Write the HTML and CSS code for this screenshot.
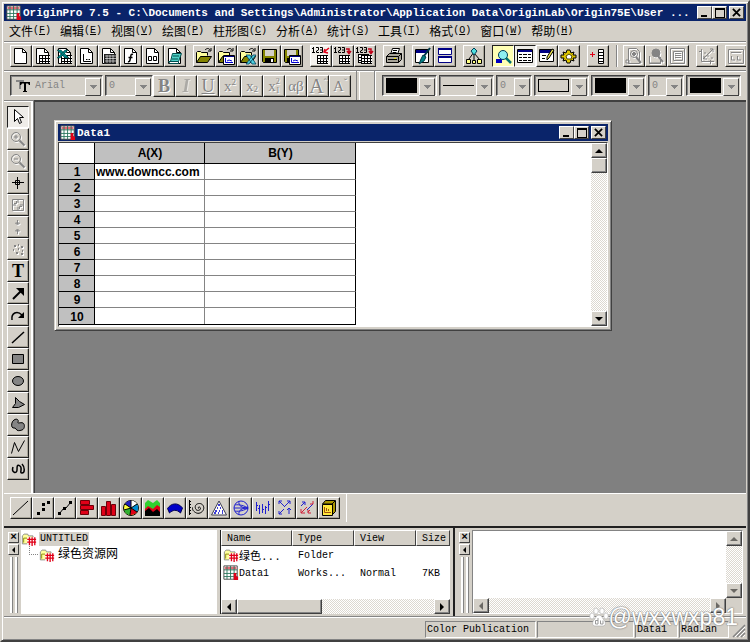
FILE: index.html
```
<!DOCTYPE html>
<html lang="zh-CN">
<head>
    <meta charset="UTF-8">
    <meta name="viewport" content="width=device-width, initial-scale=1.0">
    <title>OriginPro 7.5</title>
    <link rel="stylesheet" href="styles.css">
</head>
<body>
    <!-- Shared icon parts -->
    <svg class="defs" width="0" height="0">
        <symbol id="page" viewBox="0 0 18 18"><path d="M2.5 1.5h8l4 4v11h-12z" fill="#fff" stroke="#000"/><path d="M10.5 1.5v4h4" fill="none" stroke="#000"/></symbol>
        <symbol id="folder" viewBox="0 0 18 18"><path d="M1.5 15.5v-10l1-1h3l1 1h6v3" fill="#ffff9c" stroke="#000"/><path d="M1.5 15.5l4-6h11l-4 6z" fill="#848400" stroke="#000"/><path d="M10 3c2-2 4-2 5 0m1-2v3h-3" fill="none" stroke="#000"/></symbol>
        <symbol id="floppy" viewBox="0 0 18 18"><path d="M1.5 2.5h14v13h-13l-1-1z" fill="#848400" stroke="#000"/><path d="M4 3h9v6H4z" fill="#d4d0c8"/><path d="M4 11h9v5H4z" fill="#000"/><path d="M10 12h2v3h-2z" fill="#fff"/></symbol>
        <symbol id="sheet" viewBox="0 0 18 18"><path d="M5 8h11v9H5z" fill="#fff"/><path d="M5.500 8v9M8.500 8v9M11.500 8v9M14.500 8v9M5 8.500h11M5 11.500h11M5 14.500h11M5 16.500h11" stroke="#000"/></symbol>
        <symbol id="digits" viewBox="0 0 18 18"><path d="M1.500 0v5M0 1.500h1M0 5.500h3M4 .5h2.500v2.500l-2 1v1.500H7M8 .5h2.500v5H8M8 3h2" fill="none" stroke="#000"/></symbol>
        <symbol id="project" viewBox="0 0 18 18"><path d="M1.500 14.500v-9l2-2h4l1 2h5v9z" fill="#ffff9c" stroke="#848484"/><path d="M3 13V8h4" fill="none" stroke="#848400"/><path d="M7 7h10v9H7z" fill="#fff"/><path d="M7 9.500h10M7 12.500h10M9.500 7v9M12.500 7v10M15.500 7v9" stroke="#e00018" stroke-width="1.500"/></symbol>
        <symbol id="book" viewBox="0 0 18 18"><path d="M1 1h15v15H1z" fill="#fff" stroke="#444"/><path d="M2 2h13v3H2z" fill="#e26a76"/><path d="M1 5.500h15M1 9.500h15M1 13h15M4.500 1v15M8.500 1v15M12.500 1v15" stroke="#26735a"/><path d="M12 9h3v4h2v4h-5z" fill="#e00018"/></symbol>
    </svg>

    <div class="app">
        <header class="titlebar">
            <svg class="ico" viewBox="0 0 18 18"><use href="#book"/></svg>
            <span class="caption">OriginPro 7.5 - C:\Documents and Settings\Administrator\Application Data\OriginLab\Origin75E\User ...</span>
            <div class="winbtns">
                <button aria-label="Minimize"><svg viewBox="0 0 12 10"><path d="M2 7h6v2H2z"/></svg></button>
                <button aria-label="Maximize"><svg viewBox="0 0 12 10"><path d="M1 0h10v10H1zM2 2v7h8V2z" fill-rule="evenodd"/></svg></button>
                <button class="close" aria-label="Close"><svg viewBox="0 0 12 10"><path d="M2 1l8 8M10 1L2 9" stroke="#000" stroke-width="2"/></svg></button>
            </div>
        </header>

        <nav class="menu">
            <button>文件<span>(<u>F</u>)</span></button>
            <button>编辑<span>(<u>E</u>)</span></button>
            <button>视图<span>(<u>V</u>)</span></button>
            <button>绘图<span>(<u>P</u>)</span></button>
            <button>柱形图<span>(<u>C</u>)</span></button>
            <button>分析<span>(<u>A</u>)</span></button>
            <button>统计<span>(<u>S</u>)</span></button>
            <button>工具<span>(<u>T</u>)</span></button>
            <button>格式<span>(<u>O</u>)</span></button>
            <button>窗口<span>(<u>W</u>)</span></button>
            <button>帮助<span>(<u>H</u>)</span></button>
        </nav>

        <!-- Standard toolbar -->
        <div class="toolbar standard">
            <div class="group">
                <button class="tool" aria-label="New project"><svg viewBox="0 0 18 18"><use href="#page"/></svg></button>
                <button class="tool" aria-label="New worksheet"><svg viewBox="0 0 18 18"><use href="#page"/><use href="#sheet"/></svg></button>
                <button class="tool" aria-label="New Excel"><svg viewBox="0 0 18 18"><use href="#page"/><use href="#sheet"/><path d="M1 3h4l8 8H9zM9 3h3l-8 8H1z" fill="#008484" stroke="#003838" stroke-width=".5"/></svg></button>
                <button class="tool" aria-label="New graph"><svg viewBox="0 0 18 18"><use href="#page"/><path d="M5.500 7v7.500H13M8 12.500h1.500m1 0H12" fill="none" stroke="#000"/></svg></button>
                <button class="tool" aria-label="New matrix"><svg viewBox="0 0 18 18"><use href="#page"/><path d="M4 7h12v10H4z" fill="#222"/><path d="M5 9h11M5 11.500h11M5 14h11M7 8v8M10 8v8M13 8v8" stroke="#fff" stroke-width=".6"/></svg></button>
                <button class="tool" aria-label="New function"><svg viewBox="0 0 18 18"><use href="#page"/><path d="M11 7.500c-2-1-2 .5-2.500 3l-.5 2.500c-.3 1.500-1 2-2 1.500M6.500 10.500h4" fill="none" stroke="#000" stroke-width="1.500"/></svg></button>
                <button class="tool" aria-label="New layout"><svg viewBox="0 0 18 18"><use href="#page"/><path d="M4.500 9.500h3v4h-3zM9.500 9.500h3v4h-3z" fill="none" stroke="#000"/></svg></button>
                <button class="tool" aria-label="New notes"><svg viewBox="0 0 18 18"><use href="#page"/><path d="M6.500 6.500h9l-3 8H4.500z" fill="#4fd2c8" stroke="#004c4c"/><path d="M7 9h6M6 12h6" stroke="#004c4c"/><path d="M2.500 14.500h10v2H4z" fill="#fff" stroke="#004c4c"/></svg></button>
            </div>
            <div class="group">
                <button class="tool" aria-label="Open"><svg viewBox="0 0 18 18"><use href="#folder"/></svg></button>
                <button class="tool" aria-label="Open template"><svg viewBox="0 0 18 18"><use href="#folder"/><path d="M6.500 8.500h11v9h-11z" fill="#fff" stroke="#000"/><path d="M7 9h10v1H7z" fill="#000084"/><path d="M8.500 11v4.500H16M10 14l2-1 3 1" fill="none" stroke="#0000d0"/></svg></button>
                <button class="tool" aria-label="Open Excel"><svg viewBox="0 0 18 18"><use href="#folder"/><path d="M7 8h4l6 9h-4zM14 8h3l-7 9H7z" fill="#4fd2e0" stroke="#003c58" stroke-width=".8"/></svg></button>
                <button class="tool" aria-label="Save project"><svg viewBox="0 0 18 18"><use href="#floppy"/></svg></button>
                <button class="tool" aria-label="Save template"><svg viewBox="0 0 18 18"><use href="#floppy"/><path d="M6.500 8.500h11v9h-11z" fill="#fff" stroke="#000"/><path d="M7 9h10v1H7z" fill="#000084"/><path d="M8.500 11v4.500H16M10 14l2-1 3 1" fill="none" stroke="#0000d0"/></svg></button>
            </div>
            <div class="group">
                <button class="tool lit" aria-label="Import wizard"><svg viewBox="0 0 18 18"><use href="#digits"/><use href="#sheet"/><path d="M17 1l-5 4m1-3l-1 3 4 1" fill="none" stroke="#e00018" stroke-width="1.500"/></svg></button>
                <button class="tool" aria-label="Import ASCII"><svg viewBox="0 0 18 18"><use href="#digits"/><use href="#sheet"/><path d="M12 2h3v4m-2-2l2 2.500 2-2.500" fill="none" stroke="#c00018" stroke-width="1.500"/></svg></button>
                <button class="tool" aria-label="Import multiple"><svg viewBox="0 0 18 18"><use href="#digits"/><use href="#sheet" x="-3" y="-1"/><use href="#sheet"/><path d="M12 2h3v4m-2-2l2 2.500 2-2.500" fill="none" stroke="#c00018" stroke-width="1.500"/></svg></button>
            </div>
            <div class="group">
                <button class="tool" aria-label="Print"><svg viewBox="0 0 18 18"><path d="M5.500 7.500l2-6h7l-2 6z" fill="#fff" stroke="#000"/><path d="M8 3.500h4M7.500 5.500h4" stroke="#000"/><path d="M1.500 9.500l3-3h12v6l-3 3h-12z" fill="#a8a498" stroke="#000"/><path d="M1.500 9.500h12v6m0-6l3-3M3 12.500h9" fill="none" stroke="#000"/><path d="M9 11h2v1H9z" fill="#e8e000"/></svg></button>
            </div>
            <div class="group">
                <button class="tool" aria-label="Refresh"><svg viewBox="0 0 18 18"><path d="M1.500 2.500h13v13h-13z" fill="#fff" stroke="#000"/><path d="M2 3h12v3H2z" fill="#000084"/><path d="M16 1l-6 8" stroke="#003848" stroke-width="2"/><path d="M9 8l3 2-2 4-5 3 2-5z" fill="#008484" stroke="#003848"/></svg></button>
                <button class="tool" aria-label="Duplicate"><svg viewBox="0 0 18 18"><path d="M2.500 1.500h13v6h-13zM2.500 9.500h13v6h-13z" fill="#fff" stroke="#000084"/><path d="M2 1h14v2H2zM2 9h14v2H2z" fill="#000084"/></svg></button>
            </div>
            <div class="group">
                <button class="tool" aria-label="Custom routine"><svg viewBox="0 0 18 18"><path d="M9 5L4 12M9 5v10M9 6l6 7" stroke="#000"/><path d="M9 1l3 3-3 4-3-4z" fill="#4fe0e0" stroke="#003c58"/><path d="M1.500 12.500h4v4h-4zM7.500 13.500h3v3h-3zM12.500 12.500h4v4h-4z" fill="#ffff84" stroke="#000"/></svg></button>
            </div>
            <div class="group">
                <button class="tool pressed yellow" aria-label="Project explorer"><svg viewBox="0 0 18 18"><path d="M2 12h6v4H2z" fill="#0000c0"/><circle cx="9" cy="8" r="4.500" fill="#8ef0f0" stroke="#003c58"/><path d="M12 11l5 5" stroke="#007070" stroke-width="2.500"/></svg></button>
                <button class="tool pressed" aria-label="Results log"><svg viewBox="0 0 18 18"><path d="M1.500 2.500h15v13h-15z" fill="#fff" stroke="#000"/><path d="M2 3h14v2H2z" fill="#000084"/><path d="M3 7.500h3m1 0h4m1 0h3M3 10.500h3m1 0h4m1 0h3M3 13.500h3m1 0h4m1 0h3" stroke="#000"/></svg></button>
                <button class="tool" aria-label="Script window"><svg viewBox="0 0 18 18"><path d="M1.500 2.500h14v12h-14z" fill="#fff" stroke="#000"/><path d="M2 3h13v3H2z" fill="#000084"/><path d="M4 8.500h4M4 11.500h3" stroke="#000"/><path d="M14 2l2 1-5 8-2 2v-3z" fill="#e8e04c" stroke="#000"/></svg></button>
                <button class="tool" aria-label="Code builder"><svg viewBox="0 0 18 18"><path d="M1 8l3 0-1-3 3 1 1-3h3l1 3 3-1-1 3 3 0v3l-3 0 1 3-3-1-1 3H7l-1-3-3 1 1-3-3 0z" fill="#e0c800" stroke="#000"/><path d="M6 9l3-2 3 2-1 3H7z" fill="#fff" stroke="#524800"/></svg></button>
            </div>
            <div class="group">
                <button class="tool" aria-label="Add column"><svg viewBox="0 0 18 18"><path d="M1 7.500h5M3.500 5v5" stroke="#e00018"/><path d="M9.500 2.500h5v14h-5z" fill="#fff" stroke="#000"/><path d="M9 5.500h6M9 8.500h6M9 11.500h6M9 14.500h6" stroke="#000"/></svg></button>
            </div>
            <div class="group split">
                <button class="tool" disabled aria-label="Zoom graph"><svg viewBox="0 0 18 18" class="grey"><path d="M3.500 1.500h8l3 3v12h-11zM1 13h3v3H1z"/><circle cx="9" cy="7" r="3.500"/><path d="M11 10l5 6M9 5v4M7 7h4" stroke-width="2"/></svg></button>
                <button class="tool" disabled aria-label="Zoom out graph"><svg viewBox="0 0 18 18" class="grey"><path d="M2.500 9v7.500h11V10M2 16h12"/><circle cx="9" cy="6" r="4" fill="#848484"/><path d="M11 9l5 6" stroke-width="2"/></svg></button>
                <button class="tool" disabled aria-label="Whole page"><svg viewBox="0 0 18 18" class="grey"><path d="M1.500 1.500h14v15h-14zM4.500 4.500h9v9h-9zM6 6.500h6M6 8.500h6M6 10.500h6"/></svg></button>
            </div>
            <div class="group">
                <button class="tool" disabled aria-label="Rescale"><svg viewBox="0 0 18 18" class="grey"><path d="M3.500 2v12.500H16M1 4.500h3M12.500 13v4M5 12L15 2M6 6h2m1 3h2m2 2h2M12 2h3v3M6 9v3h3"/></svg></button>
            </div>
            <div class="group">
                <button class="tool" disabled aria-label="Layout"><svg viewBox="0 0 18 18" class="grey"><path d="M1.500 2.500h15v14h-15zM4 5.500h10M4.500 9v4H8M10.500 9v4H14"/></svg></button>
            </div>
        </div>

        <!-- Format and style toolbars -->
        <div class="toolbar format">
            <div class="combo font">
                <svg viewBox="0 0 18 18"><path d="M2 3h8v2H7v7H5V5H2z" fill="#848484"/><path d="M6 5h10v3h-1l-1-1.500h-2V14h1v1H9v-1h1V6.500H8L7 8H6z"/></svg>
                <select disabled aria-label="Font"><option>Arial</option></select>
            </div>
            <div class="combo size"><select disabled aria-label="Font size"><option>0</option></select></div>
            <div class="group letters">
                <button class="tool" disabled><b>B</b></button>
                <button class="tool" disabled><b><i>I</i></b></button>
                <button class="tool" disabled><u>U</u></button>
                <button class="tool" disabled><span>x</span><sup>2</sup></button>
                <button class="tool" disabled><span>x</span><sub>2</sub></button>
                <button class="tool" disabled aria-label="Super and subscript"><span>x</span><span class="stack"><span>2</span><span>1</span></span></button>
                <button class="tool" disabled>αβ</button>
                <button class="tool big" disabled><span>A</span><sup>ˆ</sup></button>
                <button class="tool" disabled><span>A</span><sup>ˇ</sup></button>
            </div>
            <div class="style">
                <div class="combo wide"><span class="swatch"></span><select disabled aria-label="Line color"></select></div>
                <div class="combo wide"><span class="rule"></span><select disabled aria-label="Line style"></select></div>
                <div class="combo num"><select disabled aria-label="Line width"><option>0</option></select></div>
                <div class="combo wide"><span class="swatch empty"></span><select disabled aria-label="Fill pattern"></select></div>
                <div class="combo wide"><span class="swatch"></span><select disabled aria-label="Fill color"></select></div>
                <div class="combo num"><select disabled aria-label="Pattern width"><option>0</option></select></div>
                <div class="combo wide"><span class="swatch"></span><select disabled aria-label="Pattern color"></select></div>
            </div>
        </div>

        <main class="work">
            <!-- Drawing tools -->
            <div class="tools">
                <button class="tool pressed" aria-label="Pointer"><svg viewBox="0 0 18 18"><path d="M5.500 1.500v12l3-3 2 5 2-1-2-5h4z" fill="#fff" stroke="#000"/></svg></button>
                <button class="tool" disabled aria-label="Zoom in"><svg viewBox="0 0 18 18" class="grey"><circle cx="7" cy="7" r="4.500"/><path d="M5 7h4M7 5v4"/><path d="M10.500 10.500l5 5" stroke-width="2"/></svg></button>
                <button class="tool" disabled aria-label="Zoom out"><svg viewBox="0 0 18 18" class="grey"><circle cx="7" cy="7" r="4.500"/><path d="M5 7h4"/><path d="M10.500 10.500l5 5" stroke-width="2"/></svg></button>
                <button class="tool" aria-label="Screen reader"><svg viewBox="0 0 18 18"><path d="M8.500 3v12M3 8.500h12" stroke="#000"/><path d="M6.500 6.500h4v4h-4z" fill="none" stroke="#000"/></svg></button>
                <button class="tool" disabled aria-label="Data reader"><svg viewBox="0 0 18 18" class="grey"><path d="M3.500 3.500h11v11h-11zM9 4v3m0 4v3M4 9h3m4 0h3M7.500 5v2.500H5M10.500 13v-2.500H13"/></svg></button>
                <button class="tool" disabled aria-label="Data selector"><svg viewBox="0 0 18 18" class="grey"><path d="M8.500 2v4m-2-1l2 2 2-2zM8.500 16v-4m-2 1l2-2 2 2z"/></svg></button>
                <button class="tool" disabled aria-label="Draw data"><svg viewBox="0 0 18 18" class="grey"><path d="M5 6h2M9 5h1M12 7h2M4 10h1M9 9h1M7 13h2M13 11h1M12 14h2" stroke-width="2"/></svg></button>
                <button class="tool glyph" aria-label="Text">T</button>
                <button class="tool" aria-label="Arrow"><svg viewBox="0 0 18 18"><path d="M4 15l8-8" stroke="#000" stroke-width="2"/><path d="M7 4h8v8z"/></svg></button>
                <button class="tool" aria-label="Curved arrow"><svg viewBox="0 0 18 18"><path d="M3 14C2 7 8 4 13 9" fill="none" stroke="#000" stroke-width="1.500"/><path d="M15 6v6H9z"/></svg></button>
                <button class="tool" aria-label="Line"><svg viewBox="0 0 18 18"><path d="M3 15L15 4" stroke="#000" stroke-width="1.500"/></svg></button>
                <button class="tool" aria-label="Rectangle"><svg viewBox="0 0 18 18"><path d="M3.500 4.500h11v9h-11z" fill="#848484" stroke="#000"/></svg></button>
                <button class="tool" aria-label="Circle"><svg viewBox="0 0 18 18"><ellipse cx="9" cy="9" rx="5.500" ry="4.500" fill="#848484" stroke="#000"/></svg></button>
                <button class="tool" aria-label="Polygon"><svg viewBox="0 0 18 18"><path d="M6.500 3.500l4 4 5 3-6 3h-6l3-4z" fill="#848484" stroke="#000"/></svg></button>
                <button class="tool" aria-label="Region"><svg viewBox="0 0 18 18"><path d="M5 4c3-2 5 0 4 2s3 0 5 1 2 6-1 7-5 1-6-1-3 0-4-2 0-6 2-7z" fill="#848484" stroke="#000"/></svg></button>
                <button class="tool" aria-label="Polyline"><svg viewBox="0 0 18 18"><path d="M2.500 15.500l3-11 4 9 6-11" fill="none" stroke="#000"/></svg></button>
                <button class="tool" aria-label="Freehand"><svg viewBox="0 0 18 18"><path d="M4 7c-2 6 4 7 4 3S8 4 11 6s-1 7 2 7 3-6 0-9" fill="none" stroke="#000" stroke-width="1.500"/></svg></button>
            </div>

            <div class="mdi">
                <section class="child">
                    <div class="titlebar">
                        <svg class="ico" viewBox="0 0 18 18"><use href="#book"/></svg>
                        <span class="caption">Data1</span>
                        <div class="winbtns">
                            <button aria-label="Minimize"><svg viewBox="0 0 12 10"><path d="M2 7h6v2H2z"/></svg></button>
                            <button aria-label="Maximize"><svg viewBox="0 0 12 10"><path d="M1 0h10v10H1zM2 2v7h8V2z" fill-rule="evenodd"/></svg></button>
                            <button class="close" aria-label="Close"><svg viewBox="0 0 12 10"><path d="M2 1l8 8M10 1L2 9" stroke="#000" stroke-width="2"/></svg></button>
                        </div>
                    </div>
                    <div class="sheet">
                        <div class="cells">
                            <table>
                                <colgroup><col class="num"><col class="a"><col class="b"></colgroup>
                                <thead><tr><td></td><th>A(X)</th><th>B(Y)</th></tr></thead>
                                <tbody>
                                    <tr><th>1</th><td>www.downcc.com</td><td></td></tr>
                                    <tr><th>2</th><td></td><td></td></tr>
                                    <tr><th>3</th><td></td><td></td></tr>
                                    <tr><th>4</th><td></td><td></td></tr>
                                    <tr><th>5</th><td></td><td></td></tr>
                                    <tr><th>6</th><td></td><td></td></tr>
                                    <tr><th>7</th><td></td><td></td></tr>
                                    <tr><th>8</th><td></td><td></td></tr>
                                    <tr><th>9</th><td></td><td></td></tr>
                                    <tr><th>10</th><td></td><td></td></tr>
                                </tbody>
                            </table>
                        </div>
                        <div class="scroll vert">
                            <button aria-label="Scroll up"><i class="up"></i></button>
                            <span class="thumb"></span>
                            <button class="end" aria-label="Scroll down"><i class="down"></i></button>
                        </div>
                    </div>
                </section>
            </div>
        </main>

        <!-- 2D graphs toolbar -->
        <div class="toolbar graphs">
            <div class="group">
                <button class="tool" aria-label="Line plot"><svg viewBox="0 0 18 18"><path d="M1 16L16 2" stroke="#000"/></svg></button>
                <button class="tool" aria-label="Scatter plot"><svg viewBox="0 0 18 18"><path d="M3 13h3v3H3zM8 9h3v3H8zM8 4h3v3H8zM13 2h3v3h-3z"/></svg></button>
                <button class="tool" aria-label="Line and symbol"><svg viewBox="0 0 18 18"><path d="M3 15l5-6 2 0 5-6" fill="none" stroke="#000"/><path d="M2 13h3v3H2zM7 8h3v3H7zM13 2h3v3h-3z"/></svg></button>
                <button class="tool" aria-label="Bar"><svg viewBox="0 0 18 18"><path d="M2.500 1.500h9v4h-9zM2.500 6.500h13v4h-13zM2.500 11.500h8v4h-8z" fill="#e00018" stroke="#6c0008"/></svg></button>
                <button class="tool" aria-label="Column"><svg viewBox="0 0 18 18"><path d="M1.500 7.500h4v9h-4zM6.500 2.500h4v14h-4zM11.500 5.500h4v11h-4z" fill="#e00018" stroke="#6c0008"/></svg></button>
                <button class="tool" aria-label="Pie"><svg viewBox="0 0 18 18"><circle cx="9" cy="9" r="7.500" fill="#ffff3c" stroke="#000"/><path d="M9 9V1.500A7.500 7.500 0 0 1 15 5z" fill="#fff"/><path d="M9 9l6-4a7.500 7.500 0 0 1 0 8z" fill="#008bd0"/><path d="M9 9l6 4a7.500 7.500 0 0 1-7 3z" fill="#e00018"/><path d="M9 9l-1 7a7.500 7.500 0 0 1-6-5z" fill="#30b030"/><path d="M9 9V1.500A7.500 7.500 0 0 0 3 5z" fill="#2020c0"/><path d="M9 1v8l6-4M9 9l6 4M9 9l-1 7M9 9l-7 2M9 9L3 5" fill="none" stroke="#000"/></svg></button>
                <button class="tool" aria-label="Area"><svg viewBox="0 0 18 18"><path d="M1 4h15v12H1z" fill="#e00018"/><path d="M1 4l3-3 5 3 4-3 3 3v4l-3-2-4 4-5-3-3 3z" fill="#30d030"/><path d="M1 12l4-3 4 4 4-3 3 3v4H1z"/></svg></button>
                <button class="tool" aria-label="Fill area"><svg viewBox="0 0 18 18"><path d="M1.500 9.500C5 4 12 3 16.500 9l-2 5c-4-4-8-3-11 0z" fill="#0000c8" stroke="#000050"/></svg></button>
                <button class="tool" aria-label="Polar"><svg viewBox="0 0 18 18"><path d="M1.500 1v15M1 2.500h2M1 5.500h2M1 8.500h2M1 11.500h2M1 14.500h2M10.500 9.500c-1-2 2-2 2 0s-4 3-5 0 1-5 4-5 5 3 4 6-5 5-8 3-3-3-3-5" fill="none" stroke="#000"/></svg></button>
                <button class="tool" aria-label="Ternary"><svg viewBox="0 0 18 18"><path d="M9 2l7.500 14h-15z" fill="#fff" stroke="#3c3c50"/><path d="M8 6h2M7 9h1m2 0h1M5 12h2m2 0h1m2 0h1M4 14h2m2 0h1m3 0h1" stroke="#0000c8" stroke-width="1.500"/></svg></button>
                <button class="tool" aria-label="Smith chart"><svg viewBox="0 0 18 18" class="blue"><circle cx="9" cy="9" r="7"/><path d="M2 9h14M3 6c4-1 10 1 13 3-3 2-9 4-13 3M7 2c-1 5 3 7 9 7-6 0-10 2-9 7"/></svg></button>
                <button class="tool" aria-label="High low close"><svg viewBox="0 0 18 18" class="blue"><path d="M2.500 3v9M2 6.500h2M5.500 6v9M4 9.500h1M8.500 5v9M8 10.500h2M11.500 7v8M11 8.500h2M14.500 2v10M14 5.500h2"/></svg></button>
                <button class="tool" aria-label="Vector"><svg viewBox="0 0 18 18" class="blue"><path d="M14 2L9 7m5-5h-3m3 0v3M3 2l6 6M3 2h3M3 2v3M3 15l5-5m-5 5v-3m0 3h3M13 15V9m-2 2l2-2 2 2"/></svg></button>
                <button class="tool" aria-label="XYAM vector"><svg viewBox="0 0 18 18" class="blue"><path d="M3 7l4-4m0 0H4m3 0v3M9 11l6-6"/><path d="M15 2v3h-3M3 10v4h4M3 14l6-6M10 13l2-2m-2 0v3h3" stroke="#d02038"/></svg></button>
                <button class="tool" aria-label="Template library"><svg viewBox="0 0 18 18"><path d="M5.500 1.500h10v11l-3 3V5h-10z" fill="#a89400" stroke="#000"/><path d="M2.500 5.500h10v11h-10z" fill="#ffe83c" stroke="#000"/><path d="M4.500 8v5.500H11M6.500 12V9m2 3v-2" fill="none" stroke="#a05010"/><path d="M12 5l3-3" stroke="#000"/></svg></button>
            </div>
        </div>

        <!-- Project explorer and results log -->
        <div class="dock">
            <div class="pane explorer">
                <div class="grip"><button aria-label="Close">×</button><button aria-label="Collapse"><i class="left"></i></button><span></span></div>
                <div class="tree">
                    <div class="node root"><svg class="ico" viewBox="0 0 18 18"><use href="#project"/></svg><span>UNTITLED</span></div>
                    <div class="node leaf"><svg class="ico" viewBox="0 0 18 18"><use href="#project"/></svg><span>绿色资源网</span></div>
                </div>
                <div class="list">
                    <table>
                        <colgroup><col class="name"><col class="type"><col class="view"><col class="sz"></colgroup>
                        <thead><tr><th>Name</th><th>Type</th><th>View</th><th>Size</th></tr></thead>
                        <tbody>
                            <tr><td><div><svg class="ico" viewBox="0 0 18 18"><use href="#project"/></svg><span>绿色...</span></div></td><td>Folder</td><td></td><td></td></tr>
                            <tr><td><div><svg class="ico" viewBox="0 0 18 18"><use href="#book"/></svg><span>Data1</span></div></td><td>Works...</td><td>Normal</td><td>7KB</td></tr>
                        </tbody>
                    </table>
                    <div class="scroll horiz">
                        <button aria-label="Scroll left"><i class="left"></i></button>
                        <span class="thumb"></span>
                        <button class="end" aria-label="Scroll right"><i class="right"></i></button>
                    </div>
                </div>
            </div>
            <div class="pane log">
                <div class="grip"><button aria-label="Close">×</button><button aria-label="Collapse"><i class="left"></i></button><span></span></div>
                <div class="output">
                    <textarea aria-label="Results log" readonly></textarea>
                    <div class="scroll vert">
                        <button disabled aria-label="Scroll up"><i class="up"></i></button>
                        <button class="end" disabled aria-label="Scroll down"><i class="down"></i></button>
                    </div>
                    <div class="scroll horiz">
                        <button disabled aria-label="Scroll left"><i class="left"></i></button>
                        <button class="end" disabled aria-label="Scroll right"><i class="right"></i></button>
                    </div>
                </div>
            </div>
        </div>

        <footer class="status">
            <span class="cell theme">Color Publication</span>
            <span class="cell blank"></span>
            <span class="cell book">Data1</span>
            <span class="cell unit">Radian</span>
            <svg class="corner" viewBox="0 0 14 14"><path d="M1 13L13 1M5 13l8-8M9 13l4-4" stroke="#848484" stroke-width="1.500"/><path d="M3 13L13 3M7 13l6-6M11 13l2-2" stroke="#fff"/></svg>
        </footer>

        <div class="watermark">
            <svg viewBox="0 0 20 20"><g fill="#fff" stroke="#a8a8a8" stroke-width=".6"><ellipse cx="3" cy="9" rx="2.300" ry="3"/><ellipse cx="7" cy="4" rx="2.300" ry="3"/><ellipse cx="13" cy="4" rx="2.300" ry="3"/><ellipse cx="17" cy="9" rx="2.300" ry="3"/><path d="M10 8c3 0 3 3 5 5s2 6-1 6H6c-3 0-3-4-1-6s2-5 5-5z"/></g><path d="M9 11v6H6.500v-3.500H9M11.500 13.500v3.500H14v-3.500" fill="none" stroke="#999"/></svg>
            <span>@wxxwxp81</span>
        </div>
    </div>
</body>
</html>
```
FILE: styles.css
```
* {
    box-sizing: border-box;
}

body {
    margin: 0;
    background: #d4d0c8;
    font-family: "Liberation Mono", "Noto Sans CJK SC", monospace;
    font-size: 10px;
    color: #000;
}

button, select, textarea {
    font: inherit;
    color: inherit;
    margin: 0;
    padding: 0;
    border: 0;
    border-radius: 0;
    background: none;
}

.defs {
    position: absolute;
}

.app {
    position: relative;
    display: flex;
    flex-direction: column;
    min-height: 100vh;
    padding: 2px;
    border: 2px solid;
    border-color: #d4d0c8 #404040 #404040 #d4d0c8;
    box-shadow: inset 1px 1px #fff, inset -1px -1px #848484;
    background: #d4d0c8;
}

.ico {
    width: 16px;
    height: 16px;
    flex: none;
}

/* Title bars */
.titlebar {
    display: flex;
    align-items: center;
    height: 17px;
    flex: none;
    padding: 0 2px;
    background: #0a246a;
    color: #fff;
    font-size: 11px;
    font-weight: bold;
}

.caption {
    flex: 1;
    padding-left: 1px;
    overflow: hidden;
    white-space: pre;
}

.winbtns {
    display: flex;
}

.winbtns button {
    width: 15px;
    height: 13px;
    display: flex;
    align-items: center;
    justify-content: center;
    background: #d4d0c8;
    border: 1px solid;
    border-color: #fff #404040 #404040 #fff;
}

.winbtns svg {
    width: 12px;
    height: 10px;
}

.winbtns .close {
    margin-left: 2px;
}

.winbtns .close svg {
    width: 11px;
    height: 9px;
}

/* Menu */
.menu {
    display: flex;
    height: 19px;
    flex: none;
    margin-bottom: 1px;
    padding-left: 5px;
    font-size: 12px;
    gap: 9px;
}

.menu button {
    display: flex;
    align-items: center;
}

.menu span {
    font-size: 10px;
    width: 18px;
}

/* Toolbars */
.toolbar {
    display: flex;
    align-items: center;
    flex: none;
    height: 30px;
    padding-left: 6px;
    border-top: 1px solid #848484;
    box-shadow: inset 0 1px #fff;
    overflow: hidden;
}

.group {
    display: flex;
    flex: none;
}

.standard {
    height: 29px;
    gap: 7px;
}

.standard .split {
    border-left: 1px solid #848484;
    box-shadow: inset 1px 0 #fff;
    padding-left: 6px;
}

.tool {
    width: 22px;
    height: 22px;
    flex: none;
    display: flex;
    align-items: center;
    justify-content: center;
    border: 1px solid;
    border-color: #fff #202020 #202020 #fff;
    box-shadow: inset -1px -1px #a8a498;
}

.tool svg {
    width: 18px;
    height: 18px;
}

.tool:disabled {
    color: #848484;
    text-shadow: 1px 1px #fff;
}

.tool.lit {
    background: #f4f2ee;
}

.tool.pressed {
    border-color: #202020 #fff #fff #202020;
    box-shadow: none;
    background: #eeece8;
}

.tool.yellow {
    background: #ffffb4;
}

.grey {
    fill: none;
    stroke: #848484;
    filter: drop-shadow(1px 1px #fff);
}

.blue {
    fill: none;
    stroke: #2020d0;
}

.format {
    height: 30px;
}

.letters {
    margin-right: 6px;
    font-family: "Liberation Serif", serif;
    font-size: 18px;
    line-height: 18px;
}

.letters .tool:nth-child(n+4) {
    font-size: 15px;
}

.letters .tool.big {
    font-size: 20px;
}

.letters sup, .letters sub {
    font-size: 9px;
    line-height: 9px;
    vertical-align: baseline;
}

.letters sup {
    align-self: flex-start;
    margin-top: 2px;
}

.letters sub {
    align-self: flex-end;
    margin-bottom: 2px;
}

.stack {
    display: flex;
    flex-direction: column;
    align-items: center;
    font-size: 8px;
    line-height: 9px;
}

/* Combo boxes */
.combo {
    position: relative;
    display: flex;
    align-items: center;
    height: 21px;
    flex: none;
    border: 1px solid;
    border-color: #404040 #fff #fff #404040;
    box-shadow: inset 1px 1px #848484;
    margin-right: 2px;
}

.combo::after {
    content: "";
    position: absolute;
    right: 1px;
    top: 2px;
    width: 14px;
    height: 16px;
    border: 1px solid;
    border-color: #fff #404040 #404040 #fff;
    background: linear-gradient(#848484, #848484) center 6px / 7px 1px no-repeat,
        linear-gradient(#848484, #848484) center 7px / 5px 1px no-repeat,
        linear-gradient(#848484, #848484) center 8px / 3px 1px no-repeat,
        linear-gradient(#848484, #848484) center 9px / 1px 1px no-repeat,
        #d4d0c8;
}

.combo select {
    flex: 1;
    min-width: 0;
    height: 19px;
    padding-left: 3px;
    appearance: none;
    opacity: 1;
    color: #848484;
    font-size: 10px;
}

.combo svg {
    width: 18px;
    height: 18px;
    margin-left: 3px;
}

.font {
    width: 93px;
}

.size {
    width: 48px;
    margin-right: 0;
}

.style {
    display: flex;
    flex: 1;
    align-self: stretch;
    align-items: center;
    border-left: 1px solid #848484;
    box-shadow: inset 1px 0 #fff;
    margin-left: 17px;
    padding-left: 5px;
}

.style::before {
    content: "";
    align-self: stretch;
    width: 2px;
    margin-left: -24px;
    margin-right: 22px;
    border-left: 1px solid #848484;
    border-right: 1px solid #fff;
}

.wide {
    width: 55px;
}

.num {
    width: 36px;
}

.swatch {
    width: 31px;
    height: 15px;
    margin-left: 3px;
    background: #000;
}

.swatch.empty {
    height: 13px;
    background: none;
    border: 1px solid #000;
}

.rule {
    width: 31px;
    height: 1px;
    margin-left: 3px;
    background: #000;
}

/* Work area */
.work {
    display: flex;
    flex: 1;
}

.tools {
    display: flex;
    flex-direction: column;
    width: 30px;
    flex: none;
    padding: 5px 0 13px 3px;
    border-top: 1px solid #848484;
    border-right: 1px solid #848484;
    box-shadow: inset -2px 1px #fff;
}

.glyph {
    font-family: "Liberation Serif", serif;
    font-size: 18px;
    font-weight: bold;
}

.mdi {
    position: relative;
    flex: 1;
    background: #808080;
    border-top: 2px solid #404040;
    border-left: 1px solid #404040;
}

.child {
    position: absolute;
    left: 19px;
    top: 18px;
    width: 558px;
    padding: 3px;
    background: #d4d0c8;
    border: 1px solid;
    border-color: #d4d0c8 #404040 #404040 #d4d0c8;
    box-shadow: inset 1px 1px #fff, inset -1px -1px #848484;
}

.sheet {
    display: flex;
    height: 185px;
    margin-top: 1px;
    border: 1px solid;
    border-color: #404040 #fff #fff #404040;
}

.cells {
    flex: 1;
    background: #fff;
    overflow: hidden;
}

.cells table {
    width: 297px;
    table-layout: fixed;
    border-collapse: separate;
    border-spacing: 0;
    font-family: "Liberation Sans", sans-serif;
    font-size: 12px;
    font-weight: bold;
    border-bottom: 1px solid #000;
}

.cells .num {
    width: 36px;
}

.cells .a {
    width: 110px;
}

.cells .b {
    width: 151px;
}

.cells th, .cells td {
    height: 16px;
    padding: 2px 0 0 1px;
    line-height: 13px;
    border-right: 1px solid #848484;
    border-bottom: 1px solid #848484;
    white-space: nowrap;
}

.cells tr > :last-child {
    border-right-color: #000;
}

.cells th {
    background: #c0c0c0;
    border-color: #000;
}

.cells thead th, .cells thead td {
    height: 21px;
    padding-top: 0;
    border-color: #000;
}

.cells tbody tr:last-child > * {
    border-bottom: 0;
}

/* Scroll bars */
.scroll {
    display: flex;
    flex: none;
    background: repeating-conic-gradient(#fff 0% 25%, #dcd8d0 0% 50%) 0 0 / 2px 2px;
}

.vert {
    flex-direction: column;
    width: 16px;
}

.horiz {
    height: 15px;
}

.scroll button, .thumb, .grip button {
    display: flex;
    align-items: center;
    justify-content: center;
    flex: none;
    width: 16px;
    height: 15px;
    background: #d4d0c8;
    border: 1px solid;
    border-color: #fff #404040 #404040 #fff;
    box-shadow: inset -1px -1px #848484;
}

.scroll .end {
    margin-top: auto;
}

.horiz .end {
    margin: 0 0 0 auto;
}

.list .thumb {
    width: 85px;
}

i.up, i.down, i.left, i.right {
    width: 0;
    height: 0;
    border: 4px solid transparent;
}

i.up {
    border-top: 0;
    border-bottom-color: #000;
}

i.down {
    border-bottom: 0;
    border-top-color: #000;
}

i.left {
    border-left: 0;
    border-right-color: #000;
}

i.right {
    border-right: 0;
    border-left-color: #000;
}

button:disabled i {
    opacity: 0.5;
}

.graphs {
    height: 33px;
    padding-bottom: 4px;
    border-top: 1px solid #fff;
    box-shadow: none;
}

.graphs .group {
    align-self: stretch;
    align-items: center;
    padding-right: 6px;
    border-right: 1px solid #fff;
}

/* Docked panes */
.dock {
    display: flex;
    flex: none;
    height: 91px;
    border-top: 2px solid #202020;
    border-bottom: 1px solid #848484;
}

.pane {
    display: flex;
    padding: 2px 3px;
    min-width: 0;
}

.explorer {
    width: 449px;
    flex: none;
}

.log {
    flex: 1;
    border-left: 2px solid #202020;
}

.grip {
    display: flex;
    flex-direction: column;
    width: 14px;
    flex: none;
    padding: 2px 2px 1px 1px;
    gap: 1px;
}

.grip button {
    width: 11px;
    height: 11px;
    font-size: 11px;
    font-weight: bold;
    line-height: 9px;
    box-shadow: none;
}

.grip i.left {
    border-width: 3px 3px 3px 0;
}

.grip span {
    flex: 1;
    width: 7px;
    margin: 1px 2px 0;
    border: solid #fff;
    border-width: 0 2px;
    box-shadow: 1px 0 #848484, inset 1px 0 #848484;
}

.tree {
    width: 196px;
    padding-top: 1px;
    background: #fff;
}

.node {
    display: flex;
    align-items: center;
    gap: 2px;
    height: 15px;
}

.node span {
    line-height: 14px;
    padding: 0 1px;
}

.root span {
    background: #d4d0c8;
}

.leaf {
    font-size: 12px;
    height: 17px;
    padding-left: 18px;
    background: repeating-linear-gradient(90deg, #848484 0 1px, #fff 1px 2px) 8px 8px / 10px 1px no-repeat,
        repeating-linear-gradient(#848484 0 1px, #fff 1px 2px) 8px 0 / 1px 8px no-repeat;
}

.list {
    display: flex;
    flex-direction: column;
    flex: 1;
    margin-left: 3px;
    border-left: 1px solid #202020;
    background: #fff;
}

.list table {
    width: 100%;
    table-layout: fixed;
    border-spacing: 0;
}

.list .name {
    width: 71px;
}

.list .type, .list .view {
    width: 62px;
}

.list th {
    height: 16px;
    padding: 0 0 0 5px;
    text-align: left;
    font-weight: normal;
    background: #d4d0c8;
    border: 1px solid;
    border-color: #fff #404040 #404040 #fff;
}

.list td {
    height: 18px;
    padding: 0 0 0 6px;
    white-space: nowrap;
}

.list td:first-child {
    padding-left: 2px;
}

.list td div {
    display: flex;
    align-items: center;
    height: 17px;
}

.list tbody tr:first-child div {
    font-size: 11px;
}

.list .scroll {
    margin-top: auto;
}

.output {
    display: grid;
    grid-template-columns: 1fr 16px;
    grid-template-rows: 1fr 15px;
    flex: 1;
    border: 1px solid;
    border-color: #848484 #fff #fff #848484;
}

.output textarea {
    width: 100%;
    height: 100%;
    resize: none;
    outline: 0;
    background: #fff;
}

/* Status bar */
.status {
    display: flex;
    justify-content: flex-end;
    flex: none;
    height: 21px;
    gap: 1px;
    padding-top: 3px;
    border-top: 1px solid #fff;
}

.cell {
    height: 17px;
    padding-left: 1px;
    line-height: 16px;
    border: 1px solid;
    border-color: #848484 #fff #fff #848484;
}

.theme {
    width: 111px;
}

.blank {
    width: 97px;
}

.book {
    width: 43px;
}

.unit {
    width: 50px;
}

.corner {
    width: 14px;
    height: 14px;
    margin-left: 2px;
    align-self: flex-end;
}

/* Watermark over the status bar */
.watermark {
    position: absolute;
    right: 10px;
    bottom: 11px;
    display: flex;
    align-items: center;
    font-family: "Liberation Sans", sans-serif;
    font-size: 23px;
    line-height: 24px;
    color: #fff;
    text-shadow: 0 0 1px #888, 0 0 1px #888, 0 0 2px #888;
}

.watermark svg {
    width: 20px;
    height: 20px;
}
```
